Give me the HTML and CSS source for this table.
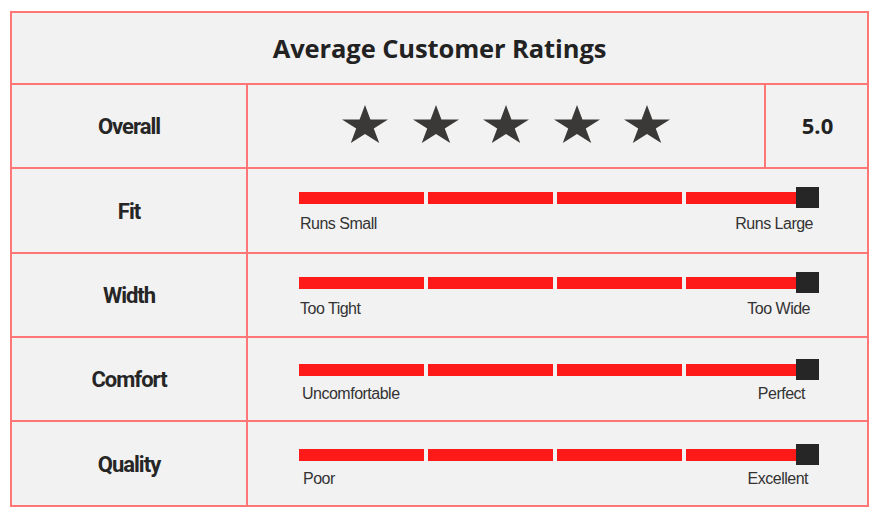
FILE: index.html
```html
<!DOCTYPE html>
<html lang="en">
<head>
<meta charset="utf-8">
<title>Average Customer Ratings</title>
<link rel="stylesheet" href="styles.css">
</head>
<body>
<div class="ratings">
  <div class="cell title">Average Customer Ratings</div>

  <div class="cell label">Overall</div>
  <div class="cell stars">
    <svg class="star" viewBox="0 0 46 38"><polygon points="23,0 28.43,14.51 46,14.51 31.78,23.48 37.22,38 23,29.02 8.78,38 14.22,23.48 0,14.51 17.57,14.51"/></svg>
    <svg class="star" viewBox="0 0 46 38"><polygon points="23,0 28.43,14.51 46,14.51 31.78,23.48 37.22,38 23,29.02 8.78,38 14.22,23.48 0,14.51 17.57,14.51"/></svg>
    <svg class="star" viewBox="0 0 46 38"><polygon points="23,0 28.43,14.51 46,14.51 31.78,23.48 37.22,38 23,29.02 8.78,38 14.22,23.48 0,14.51 17.57,14.51"/></svg>
    <svg class="star" viewBox="0 0 46 38"><polygon points="23,0 28.43,14.51 46,14.51 31.78,23.48 37.22,38 23,29.02 8.78,38 14.22,23.48 0,14.51 17.57,14.51"/></svg>
    <svg class="star" viewBox="0 0 46 38"><polygon points="23,0 28.43,14.51 46,14.51 31.78,23.48 37.22,38 23,29.02 8.78,38 14.22,23.48 0,14.51 17.57,14.51"/></svg>
  </div>
  <div class="cell score">5.0</div>

  <div class="cell label">Fit</div>
  <div class="cell scale scale-fit">
    <div class="track"><span class="seg"></span><span class="seg"></span><span class="seg"></span><span class="seg"></span><span class="knob"></span></div>
    <div class="ends"><span class="lo">Runs Small</span><span class="hi">Runs Large</span></div>
  </div>

  <div class="cell label">Width</div>
  <div class="cell scale scale-width">
    <div class="track"><span class="seg"></span><span class="seg"></span><span class="seg"></span><span class="seg"></span><span class="knob"></span></div>
    <div class="ends"><span class="lo">Too Tight</span><span class="hi">Too Wide</span></div>
  </div>

  <div class="cell label">Comfort</div>
  <div class="cell scale scale-comfort">
    <div class="track"><span class="seg"></span><span class="seg"></span><span class="seg"></span><span class="seg"></span><span class="knob"></span></div>
    <div class="ends"><span class="lo">Uncomfortable</span><span class="hi">Perfect</span></div>
  </div>

  <div class="cell label">Quality</div>
  <div class="cell scale scale-quality">
    <div class="track"><span class="seg"></span><span class="seg"></span><span class="seg"></span><span class="seg"></span><span class="knob"></span></div>
    <div class="ends"><span class="lo">Poor</span><span class="hi">Excellent</span></div>
  </div>
</div>
</body>
</html>
```

FILE: styles.css
```css
html, body {
  margin: 0;
  padding: 0;
  background: #ffffff;
}

body {
  padding: 11px 0 0 10px;
}

.ratings {
  display: grid;
  grid-template-columns: 234px 516px 101px;
  grid-template-rows: 70px 82px 83px 82px 82px 83px;
  gap: 2px;
  padding: 2px;
  width: 855px;
  background: #ff7676;
}

.cell {
  background: #f2f2f2;
}

.title {
  grid-column: 1 / 4;
  display: flex;
  align-items: center;
  justify-content: center;
  font-family: "Open Sans", "Liberation Sans", sans-serif;
  font-weight: 700;
  font-size: 25.5px;
  letter-spacing: -0.1px;
  color: #222222;
  padding-bottom: 1px;
}

.label {
  display: flex;
  align-items: center;
  justify-content: center;
  font-family: Roboto, "Liberation Sans", sans-serif;
  font-weight: 700;
  font-size: 22px;
  letter-spacing: -1px;
  color: #262626;
  padding-top: 1px;
}

.stars {
  display: flex;
  align-items: center;
  justify-content: center;
  gap: 24.5px;
  padding: 0 0 5px 0;
}

.star {
  width: 46px;
  height: 38px;
  fill: #3b3937;
}

.score {
  display: flex;
  align-items: center;
  justify-content: center;
  font-family: "Open Sans", "Liberation Sans", sans-serif;
  font-weight: 700;
  font-size: 22px;
  color: #222222;
  padding: 0 0 2px 2px;
}

.scale {
  grid-column: 2 / 4;
  padding: 23px 0 0 51px;
}

.scale-comfort { padding-top: 26px; }
.scale-quality { padding-top: 27px; }

.track {
  position: relative;
  display: flex;
  gap: 4px;
  width: 520px;
  height: 12px;
}

.seg {
  width: 125px;
  height: 12px;
  background: #ff1a1a;
}

.knob {
  position: absolute;
  right: 0;
  top: -5px;
  width: 23px;
  height: 21px;
  background: #262626;
}

.ends {
  display: flex;
  justify-content: space-between;
  width: 520px;
  margin-top: 11px;
  font-family: "Liberation Sans", Arial, sans-serif;
  font-size: 16px;
  line-height: 18px;
  letter-spacing: -0.5px;
  color: #333333;
}

.lo { padding-left: 1px; }
.hi { padding-right: 6px; }

.scale-width .lo { padding-left: 1px; }
.scale-width .hi { padding-right: 9px; }
.scale-comfort .ends { margin-top: 9px; }
.scale-comfort .lo { padding-left: 3px; }
.scale-comfort .hi { padding-right: 14px; }
.scale-quality .ends { margin-top: 9px; }
.scale-quality .lo { padding-left: 4px; }
.scale-quality .hi { padding-right: 11px; }
```
